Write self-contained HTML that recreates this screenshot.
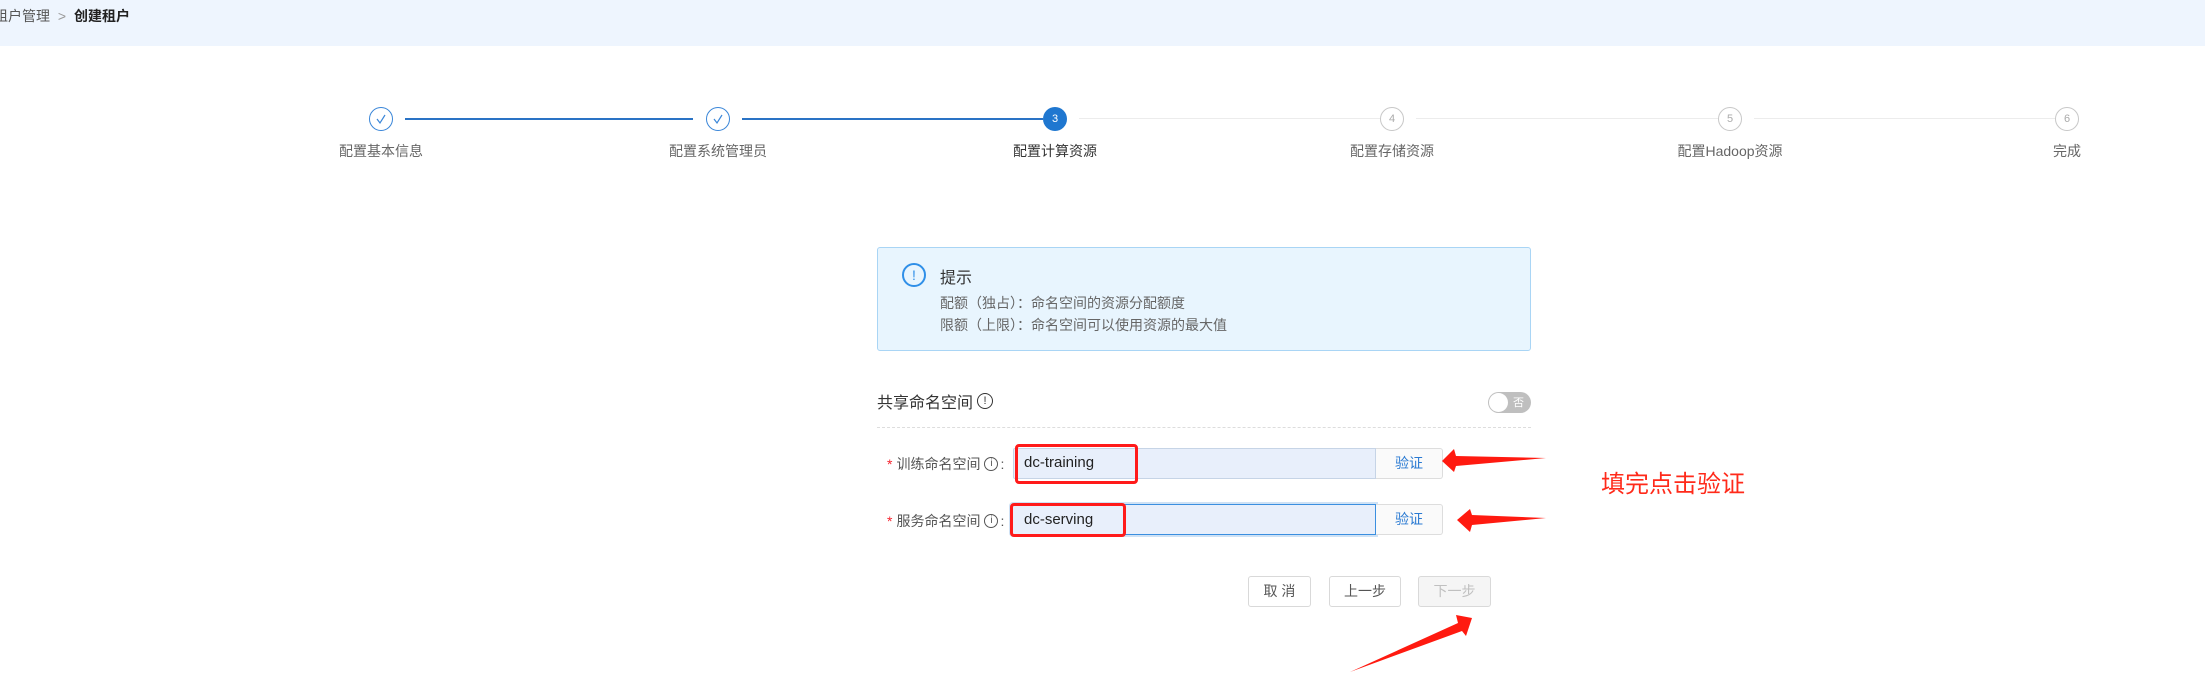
<!DOCTYPE html>
<html><head><meta charset="utf-8"><style>
*{margin:0;padding:0;box-sizing:border-box}
body{width:2205px;height:699px;position:relative;background:#fff;font-family:"Liberation Sans","Noto Sans CJK SC",sans-serif;overflow:hidden;color:#333}
.a{position:absolute;white-space:nowrap}
.hdr{position:absolute;left:0;top:0;width:2205px;height:46px;background:#eef5fe}
.c{position:absolute;width:24px;height:24px;border-radius:50%;top:107px;font-size:11px;line-height:22px;text-align:center}
.done{border:1px solid #3a86d8;background:#fff}
.act{background:#1f77d0;color:#fff;line-height:24px}
.pend{border:1px solid #c8c8c8;color:#aaa}
.ln{position:absolute;top:118px;height:2px}
.lb{position:absolute;top:141px;font-size:14px;color:#666;transform:translateX(-50%);white-space:nowrap}
.btn{position:absolute;top:576px;height:31px;border:1px solid #d9d9d9;border-radius:3px;font-size:14px;line-height:29px;text-align:center;color:#555;background:#fff}
.inp{position:absolute;height:31px;background:#e8effb;border:1px solid #c6d4e6;border-radius:2px 0 0 2px}
.vb{position:absolute;height:31px;width:67px;left:1376px;border:1px solid #ddd;border-left:none;border-radius:0 3px 3px 0;background:#fafafa;color:#2a7ad2;font-size:14px;line-height:29px;text-align:center}
.red{position:absolute;border:3px solid #ff1a1a;border-radius:4px}
.lab{position:absolute;font-size:14px;color:#555;left:887px;display:flex;align-items:center;height:20px}
.lab b{color:#f5222d;font-weight:normal;margin-right:4px}
.ic{display:inline-block;width:14px;height:14px;border:1px solid #555;border-radius:50%;font-size:10px;line-height:12px;text-align:center;margin:0 2px 0 4px}
</style></head><body>
<div class="hdr"></div>
<div class="a" style="left:-6px;top:6px;font-size:14px;color:#555">租户管理 <span style="color:#999;margin:0 4px">&gt;</span> <b style="color:#222">创建租户</b></div>

<div class="ln" style="left:405px;width:288px;background:#2a73c5"></div>
<div class="ln" style="left:742px;width:301px;background:#2a73c5"></div>
<div class="ln" style="left:1079px;width:301px;background:#ececec;height:1px"></div>
<div class="ln" style="left:1416px;width:302px;background:#ececec;height:1px"></div>
<div class="ln" style="left:1754px;width:301px;background:#ececec;height:1px"></div>

<div class="c done" style="left:369px"><svg width="22" height="22" viewBox="0 0 22 22"><path d="M7 11 L10 15 L15 7" fill="none" stroke="#3a86d8" stroke-width="1.2"/></svg></div>
<div class="c done" style="left:706px"><svg width="22" height="22" viewBox="0 0 22 22"><path d="M7 11 L10 15 L15 7" fill="none" stroke="#3a86d8" stroke-width="1.2"/></svg></div>
<div class="c act" style="left:1043px">3</div>
<div class="c pend" style="left:1380px">4</div>
<div class="c pend" style="left:1718px">5</div>
<div class="c pend" style="left:2055px">6</div>
<div class="lb" style="left:381px">配置基本信息</div>
<div class="lb" style="left:718px">配置系统管理员</div>
<div class="lb" style="left:1055px;color:#333">配置计算资源</div>
<div class="lb" style="left:1392px">配置存储资源</div>
<div class="lb" style="left:1730px">配置Hadoop资源</div>
<div class="lb" style="left:2067px">完成</div>

<div class="a" style="left:877px;top:247px;width:654px;height:104px;background:#e8f5fe;border:1px solid #a9d5f5;border-radius:3px"></div>
<div class="a" style="left:902px;top:263px;width:24px;height:24px;border:2px solid #2f8fe8;border-radius:50%;color:#2f8fe8;font-size:14px;text-align:center;line-height:20px">!</div>
<div class="a" style="left:940px;top:264px;font-size:16px;color:#333">提示</div>
<div class="a" style="left:940px;top:293px;font-size:14px;color:#666">配额（独占）：命名空间的资源分配额度</div>
<div class="a" style="left:940px;top:315px;font-size:14px;color:#666">限额（上限）：命名空间可以使用资源的最大值</div>

<div class="a" style="left:877px;top:389px;font-size:16px;color:#333;display:flex;align-items:center;height:24px">共享命名空间<span class="ic" style="width:16px;height:16px;line-height:14px;font-size:11px;border-color:#333">!</span></div>
<div class="a" style="left:1488px;top:392px;width:43px;height:21px;border-radius:11px;background:#bfbfbf"></div>
<div class="a" style="left:1489px;top:393px;width:19px;height:19px;border-radius:50%;background:#fff"></div>
<div class="a" style="left:1513px;top:394px;font-size:11px;color:#fff">否</div>
<div class="a" style="left:877px;top:427px;width:654px;border-top:1px dashed #ddd"></div>

<div class="lab" style="top:454px"><b>*</b>训练命名空间<span class="ic">i</span>:</div>
<div class="inp" style="left:1013px;top:448px;width:363px"></div>
<div class="vb" style="top:448px">验证</div>
<div class="a" style="left:1024px;top:454px;font-size:15px;color:#222">dc-training</div>
<div class="red" style="left:1015px;top:444px;width:123px;height:40px"></div>

<div class="lab" style="top:511px"><b>*</b>服务命名空间<span class="ic">i</span>:</div>
<div class="inp" style="left:1011px;top:504px;width:365px;border-color:#3b8fe0;box-shadow:0 0 0 2px #cfe2f5"></div>
<div class="vb" style="top:504px">验证</div>
<div class="a" style="left:1024px;top:511px;font-size:15px;color:#222">dc-serving</div>
<div class="red" style="left:1010px;top:503px;width:116px;height:34px"></div>

<div class="a" style="left:1601px;top:464px;font-size:24px;color:#ff2a1a">填完点击验证</div>

<div class="btn" style="left:1248px;width:63px">取 消</div>
<div class="btn" style="left:1329px;width:72px">上一步</div>
<div class="btn" style="left:1418px;width:73px;background:#f5f5f5;color:#c0c0c0">下一步</div>

<svg class="a" style="left:0;top:0" width="2205" height="699">
<polygon fill="#ff1a10" points="1442,461 1454,449 1456,456 1546,458 1456,466 1454,472"/>
<polygon fill="#ff1a10" points="1457,520 1470,509 1472,515 1546,518 1472,525 1470,532"/>
<polygon fill="#ff1a10" points="1350,672 1458,623 1456,615 1472,618 1466,636 1462,631"/>
</svg>
</body></html>
